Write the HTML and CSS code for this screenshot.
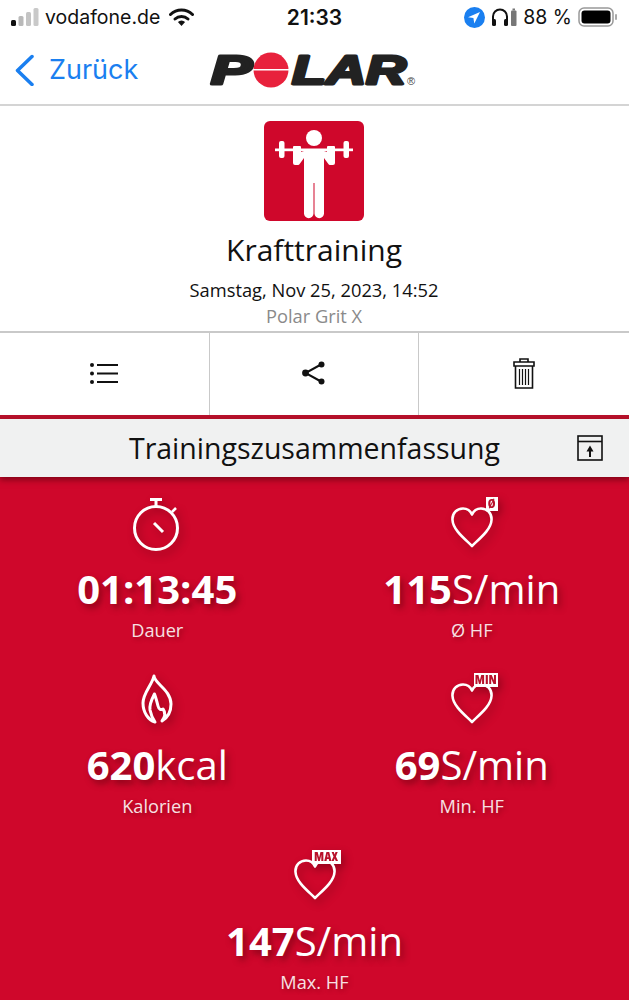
FILE: index.html
```html
<!DOCTYPE html>
<html lang="de">
<head>
<meta charset="utf-8">
<title>Krafttraining</title>
<link rel="stylesheet" href="styles.css">
</head>
<body>
<div class="phone">
  <header class="status">
    <div class="st-left">
      <svg class="signal" width="28" height="20" viewBox="0 0 28 20"><rect x="0" y="13" width="5" height="6" rx="1.5" fill="#111"/><rect x="7.5" y="9" width="5" height="10" rx="1.5" fill="#b9b9b9"/><rect x="15" y="5" width="5" height="14" rx="1.5" fill="#c4c4c4"/><rect x="22.5" y="1" width="5" height="18" rx="1.5" fill="#c9c9c9"/></svg>
      <span class="carrier">vodafone.de</span>
      <svg class="wifi" width="25" height="18" viewBox="0 0 25 18"><path d="M1.5 6.5a16 16 0 0 1 22 0" fill="none" stroke="#111" stroke-width="3" stroke-linecap="round"/><path d="M6 11a9.5 9.5 0 0 1 13 0" fill="none" stroke="#111" stroke-width="3" stroke-linecap="round"/><path d="M12.5 18l-3.6-4a5 5 0 0 1 7.2 0z" fill="#111"/></svg>
    </div>
    <div class="st-time">21:33</div>
    <div class="st-right">
      <svg width="21" height="21" viewBox="0 0 21 21"><circle cx="10.5" cy="10.5" r="10.5" fill="#1a7ff0"/><path d="M16 5l-12 5.2 5.4.9.9 5.4z" fill="#fff"/></svg>
      <svg width="26" height="20" viewBox="0 0 26 20"><path d="M2 16V9.500a7 7 0 0 1 14 0V16" fill="none" stroke="#111" stroke-width="2"/><rect x="1" y="12" width="4" height="7" rx="1.500" fill="#111"/><rect x="13" y="12" width="4" height="7" rx="1.500" fill="#111"/><rect x="20" y="3.500" width="5.500" height="15.500" rx="1" fill="#777"/><rect x="21.500" y="1.500" width="2.500" height="2" fill="#777"/></svg>
      <span class="pct">88 %</span>
      <svg width="40" height="20" viewBox="0 0 40 20"><rect x="1" y="1" width="34" height="18" rx="5" fill="none" stroke="#999" stroke-width="1.500"/><rect x="3.500" y="3.500" width="29" height="13" rx="3" fill="#000"/><rect x="37" y="7" width="2" height="6" rx="1" fill="#aaa"/></svg>
    </div>
  </header>

  <nav class="nav">
    <div class="back">
      <svg width="20" height="32" viewBox="0 0 20 32"><path d="M18 2.500 3.500 16.500 18 30.500" fill="none" stroke="#1a7ff0" stroke-width="3.500" stroke-linecap="round" stroke-linejoin="round"/></svg>
      <span>Zurück</span>
    </div>
    <svg class="logo" width="222" height="60" viewBox="0 0 222 60">
      <text class="logo-word" x="3" y="44" textLength="41" lengthAdjust="spacingAndGlyphs">P</text>
      <circle cx="63" cy="30" r="17.500" fill="#e8213c"/>
      <rect x="45" y="29" width="36" height="1.500" fill="#fff"/>
      <text class="logo-word" x="84" y="44" textLength="114" lengthAdjust="spacingAndGlyphs">LAR</text>
      <text class="logo-reg" x="199" y="45">®</text>
    </svg>
  </nav>

  <section class="head">
    <div class="sport-tile">
      <svg width="100" height="100" viewBox="0 0 100 100">
        <circle cx="50" cy="17" r="8" fill="#fff"/>
        <rect x="11" y="27.500" width="78" height="2.700" fill="#fff"/>
        <rect x="15" y="20" width="5.500" height="17" rx="2" fill="#fff"/>
        <rect x="79.500" y="20" width="5.500" height="17" rx="2" fill="#fff"/>
        <path d="M29 26q0-1 1-1h6q1 0 1 1v5l3-1h20l3 1v-5q0-1 1-1h6q1 0 1 1v16q0 2-2 2h-3q-1 0-2-1.500L60 37v55.500a4.750 4.750 0 0 1-9.500 0V62h-1v30.500a4.750 4.750 0 0 1-9.500 0V37l-4 5.500q-1 1.500-2 1.500h-3q-2 0-2-2z" fill="#fff"/>
      </svg>
    </div>
    <h1 class="title">Krafttraining</h1>
    <p class="date">Samstag, Nov 25, 2023, 14:52</p>
    <p class="device">Polar Grit X</p>
  </section>

  <div class="toolbar">
    <div class="tool">
      <svg width="28" height="21" viewBox="0 0 28 21"><g fill="#111"><circle cx="2" cy="2" r="2"/><circle cx="2" cy="10.500" r="2"/><circle cx="2" cy="19" r="2"/><rect x="7" y="1" width="21" height="2"/><rect x="7" y="9.500" width="21" height="2"/><rect x="7" y="18" width="21" height="2"/></g></svg>
    </div>
    <div class="tool">
      <svg width="23" height="24" viewBox="0 0 23 24"><path d="M19 3.500 3.500 12 19 20.500" fill="none" stroke="#111" stroke-width="2"/><circle cx="19.500" cy="3.500" r="3" fill="#111"/><circle cx="3.500" cy="12" r="3.400" fill="#111"/><circle cx="19.500" cy="20.500" r="3" fill="#111"/></svg>
    </div>
    <div class="tool">
      <svg width="22" height="31" viewBox="0 0 22 31"><g fill="none" stroke="#111" stroke-width="1.600"><path d="M7 4V1h8v3"/><path d="M1 8V4h20v4z"/><path d="M2.500 8v22h17V8"/><path d="M6.500 11v16M9.500 11v16M12.500 11v16M15.500 11v16" stroke-width="1.200"/></g></svg>
    </div>
  </div>

  <div class="summary-bar">
    <span class="summary-title">Trainingszusammenfassung</span>
    <svg class="summary-icon" width="26" height="26" viewBox="0 0 26 26"><g fill="none" stroke="#111" stroke-width="1.600"><rect x="1" y="1" width="24" height="24"/><path d="M1 6.500h24"/></g><path d="M13 10.500l-3.500 6h2.500V22h2v-5.500h2.500z" fill="#111"/></svg>
  </div>

  <main class="stats">
    <div class="stat">
      <svg class="ic" width="52" height="56" viewBox="0 0 52 56"><g fill="none" stroke="#fff" stroke-width="3"><circle cx="25" cy="31" r="21.500"/><path d="M25 9V3M19 2.500h12" /><path d="M41 15l4-4" stroke-width="2.500"/><path d="M23 26l9 9" stroke-width="3"/></g></svg>
      <div class="val"><b>01:13:45</b></div>
      <div class="lbl">Dauer</div>
    </div>
    <div class="stat">
      <div class="ic heart-wrap">
        <svg width="44" height="42" viewBox="0 0 44 42"><path d="M22 40C15 33 3 24 2.500 14 2 7 7 2.500 13 2.500c4 0 7.500 2.500 9 6 1.500-3.500 5-6 9-6 6 0 11 4.500 10.500 11.500C41 24 29 33 22 40z" fill="none" stroke="#fff" stroke-width="2.600" stroke-linejoin="round"/></svg>
        <span class="tag tag-avg">Ø</span>
      </div>
      <div class="val"><b>115</b>S/min</div>
      <div class="lbl">Ø HF</div>
    </div>
    <div class="stat">
      <svg class="ic" width="32" height="52" viewBox="0 2 32 52"><path d="M13 3C13 10 30 17 30 31 30 39 26 45 21 48 24 44 25 40 22 36 20 37 18 37 17 33 16 29 15 25 13.500 21 11 26 8 31 9 37 10 42 12 46 14 49 7 47 2 39 2 30 2 20 11 12 13 3z" fill="none" stroke="#fff" stroke-width="3" stroke-linejoin="round"/></svg>
      <div class="val"><b>620</b>kcal</div>
      <div class="lbl">Kalorien</div>
    </div>
    <div class="stat">
      <div class="ic heart-wrap">
        <svg width="44" height="42" viewBox="0 0 44 42"><path d="M22 40C15 33 3 24 2.500 14 2 7 7 2.500 13 2.500c4 0 7.500 2.500 9 6 1.500-3.500 5-6 9-6 6 0 11 4.500 10.500 11.500C41 24 29 33 22 40z" fill="none" stroke="#fff" stroke-width="2.600" stroke-linejoin="round"/></svg>
        <span class="tag tag-min">MIN</span>
      </div>
      <div class="val"><b>69</b>S/min</div>
      <div class="lbl">Min. HF</div>
    </div>
    <div class="stat stat-wide">
      <div class="ic heart-wrap">
        <svg width="44" height="42" viewBox="0 0 44 42"><path d="M22 40C15 33 3 24 2.500 14 2 7 7 2.500 13 2.500c4 0 7.500 2.500 9 6 1.500-3.500 5-6 9-6 6 0 11 4.500 10.500 11.500C41 24 29 33 22 40z" fill="none" stroke="#fff" stroke-width="2.600" stroke-linejoin="round"/></svg>
        <span class="tag tag-max">MAX</span>
      </div>
      <div class="val"><b>147</b>S/min</div>
      <div class="lbl">Max. HF</div>
    </div>
  </main>
</div>
</body>
</html>
```
FILE: styles.css
```css
* { box-sizing: border-box; }
html, body { margin: 0; padding: 0; background: #fff; }
body { font-family: "Open Sans", "Noto Sans", sans-serif; color: #111; }
.phone { width: 629px; height: 1000px; overflow: hidden; display: flex; flex-direction: column; }

.status { height: 35px; flex: none; display: grid; grid-template-columns: 1fr auto 1fr; align-items: center; padding: 0 11px 1px 11px; font-family: Inter, "Liberation Sans", sans-serif; font-size: 19.500px; }
.st-left { display: flex; align-items: center; gap: 6px; }
.st-left .wifi { margin-left: 3px; }
.st-time { font-weight: 600; font-size: 21px; }
.st-right { display: flex; align-items: center; justify-content: flex-end; gap: 6px; }
.pct { white-space: nowrap; }

.nav { height: 71px; flex: none; display: flex; align-items: center; padding: 0 0 0 14px; border-bottom: 2px solid #d4d4d4; }
.back { display: flex; align-items: center; gap: 15px; color: #1a7ff0; font-family: Inter, "Liberation Sans", sans-serif; font-size: 27px; }
.logo { margin-left: 70px; flex: none; }
.logo-word { font-family: "Liberation Sans", sans-serif; font-style: italic; font-weight: 700; font-size: 40px; fill: #222; stroke: #222; stroke-width: 3px; stroke-linejoin: round; }
.logo-reg { font-family: "Liberation Sans", sans-serif; font-size: 11px; fill: #444; }

.head { height: 225px; flex: none; display: flex; flex-direction: column; align-items: center; padding: 15px 1px 0 0; }
.sport-tile { width: 100px; height: 100px; flex: none; border-radius: 6px; background: #cf072b; }
.title { margin: 10px 0 0; font-size: 30px; font-weight: 400; line-height: 38px; }
.date { margin: 9px 0 0; font-size: 18.300px; line-height: 24px; }
.device { margin: 2px 0 0; font-size: 18.300px; line-height: 24px; color: #8a8a8a; }

.toolbar { height: 88px; flex: none; display: grid; grid-template-columns: repeat(3, 1fr); border-top: 2px solid #c9c9c9; border-bottom: 4px solid #b8112b; }
.tool { display: flex; align-items: center; justify-content: center; border-right: 1px solid #c9c9c9; padding-bottom: 2px; }
.tool:last-child { border-right: 0; }

.summary-bar { height: 58px; flex: none; position: relative; display: flex; align-items: center; justify-content: center; background: #f0f1f1; z-index: 1; box-shadow: 0 3px 6px rgba(70,0,10,.55); }
.summary-title { font-size: 28.500px; line-height: 58px; color: #111; }
.summary-icon { position: absolute; right: 26px; top: 16px; }

.stats { flex: 1; background: #cf072b; display: grid; grid-template-columns: 1fr 1fr; grid-auto-rows: 176px; padding-top: 20px; color: #fff; }
.stat { display: flex; flex-direction: column; align-items: center; }
.stat-wide { grid-column: 1 / span 2; }
.ic { height: 56px; flex: none; filter: drop-shadow(3px 4px 4px rgba(80,0,10,.45)); }
.heart-wrap { position: relative; width: 44px; display: flex; align-items: flex-start; justify-content: center; padding-top: 9px; }
.tag { position: absolute; background: #fff; color: #b8112b; font-weight: 800; line-height: 14px; height: 14px; font-size: 12.500px; font-stretch: 75%; text-align: center; white-space: nowrap; }
.tag-avg { left: 36px; top: 0; width: 12px; }
.tag-min { left: 24px; top: 0; width: 24px; }
.tag-max { left: 19px; top: 1px; width: 29px; }
.val { margin-top: 11px; font-size: 40px; line-height: 50px; white-space: nowrap; text-shadow: 3px 4px 6px rgba(80,0,10,.5); }
.val b { font-weight: 700; }
.lbl { margin-top: 4px; font-size: 18.200px; line-height: 24px; color: #f8e0e3; text-shadow: 2px 2px 4px rgba(80,0,10,.4); }
```
